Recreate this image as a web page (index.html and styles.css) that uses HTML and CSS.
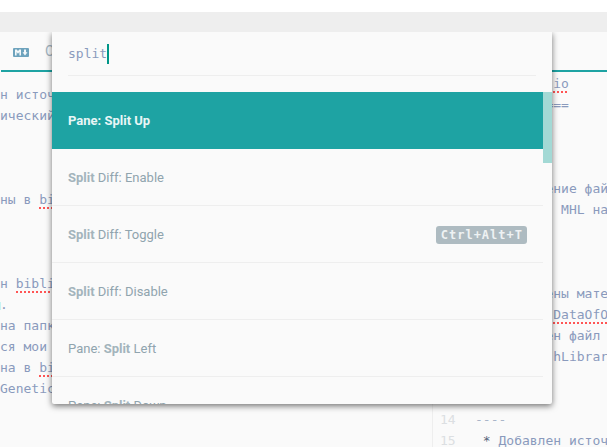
FILE: index.html
```html
<!DOCTYPE html>
<html lang="ru">
<head>
<meta charset="utf-8">
<title>Command Palette</title>
<link rel="stylesheet" href="styles.css">
</head>
<body>
<div class="app">
  <div class="title-gap"></div>
  <div class="toolbar"></div>
  <div class="tabs">
    <div class="tab">
      <svg class="md-icon" width="16" height="9" viewBox="0 0 16 9"><path fill="#6ea3bd" d="M1 0h14a1 1 0 0 1 1 1v7a1 1 0 0 1-1 1H1a1 1 0 0 1-1-1V1a1 1 0 0 1 1-1z"/><path fill="#f4f8fa" d="M2 7.500V1.500h1.800L5 3.200l1.200-1.700H8v6H6.400V4L5 5.800 3.600 4v3.500zM11 1.500h2v2.800h1.500L12 7.500 9.500 4.300H11z"/></svg>
      <span class="tab-name">CHANGELOG.md</span>
    </div>
  </div>
  <div class="panes">
    <div class="pane pane-left">
      <div class="line">н источник данных</div>
      <div class="line">ический справочник</div>
      <div class="line"></div>
      <div class="line"></div>
      <div class="line"></div>
      <div class="line">ны в <span class="typo">bibliography</span></div>
      <div class="line"></div>
      <div class="line"></div>
      <div class="line"></div>
      <div class="line">н <span class="typo">bibliography</span></div>
      <div class="line marked">.</div>
      <div class="line">на папка данных</div>
      <div class="line">ся мои данные</div>
      <div class="line">на в <span class="typo">bibliography</span></div>
      <div class="line">GeneticData</div>
    </div>
    <div class="pane pane-right">
      <div class="gutter">
        <div class="num"></div><div class="num"></div><div class="num"></div><div class="num"></div>
        <div class="num"></div><div class="num"></div><div class="num"></div><div class="num"></div>
        <div class="num"></div><div class="num"></div><div class="num"></div><div class="num"></div>
        <div class="num"></div><div class="num"></div><div class="num"></div><div class="num"></div>
        <div class="num">14</div><div class="num">15</div>
      </div>
      <div class="code">
        <div class="line">  project<span class="typo">.io</span></div>
        <div class="line">============</div>
        <div class="line"></div>
        <div class="line"></div>
        <div class="line"></div>
        <div class="line">  * Изменение файлов</div>
        <div class="line">           MHL на</div>
        <div class="line"></div>
        <div class="line"></div>
        <div class="line"></div>
        <div class="line"> * Добавлены материалы</div>
        <div class="line">          <span class="typo">DataOfOther</span></div>
        <div class="line"> * Добавлен файл</div>
        <div class="line">  в папке hLibrary</div>
        <div class="line"></div>
        <div class="line"></div>
        <div class="line rule">----</div>
        <div class="line"> <span class="star">*</span> Добавлен источник</div>
      </div>
    </div>
  </div>
  <div class="palette">
    <div class="search">
      <div class="query"><span>split</span><i class="caret"></i></div>
    </div>
    <div class="results">
      <ul class="list">
        <li class="item selected"><b>Pane: Split Up</b></li>
        <li class="item"><span><b>Split</b> Diff: Enable</span></li>
        <li class="item"><span><b>Split</b> Diff: Toggle</span><kbd class="key">Ctrl+Alt+T</kbd></li>
        <li class="item"><span><b>Split</b> Diff: Disable</span></li>
        <li class="item"><span>Pane: <b>Split</b> Left</span></li>
        <li class="item"><span>Pane: <b>Split</b> Down</span></li>
      </ul>
      <div class="track"><div class="thumb"></div></div>
    </div>
  </div>
</div>
</body>
</html>
```

FILE: styles.css
```css
* { box-sizing: border-box; }
html, body { margin: 0; height: 100%; }
body { background: #fff; overflow: hidden; }
.app { position: relative; width: 607px; height: 447px; overflow: hidden; background: #fafafa; display: flex; flex-direction: column; }
.title-gap { height: 12px; background: #fff; }
.toolbar { position: relative; z-index: 2; height: 20px; background: #eeeeee; }
.tabs { height: 40px; flex: none; border-bottom: 2px solid #1ea3a3; margin-left: 1px; }
.tab { display: flex; align-items: center; height: 38px; padding-left: 12px; gap: 16px; }
.md-icon { flex: none; margin-top: 2px; }
.tab-name { font: 14px Roboto, sans-serif; color: #a3b3bf; }
.panes { display: flex; flex: 1; min-height: 0; }
.pane { overflow: hidden; font: 13px/21px "DejaVu Sans Mono", monospace; color: #8a9abd; }
.pane-left { width: 432px; padding-top: 12px; }
.pane-right { flex: 1; display: flex; border-left: 1px solid #eeeeee; padding-top: 1px; }
.gutter { width: 42px; flex: none; color: #dcdfe2; padding-left: 7px; }
.num { height: 21px; }
.code { flex: 1; min-width: 0; }
.line { height: 21px; white-space: pre; }
.marked { position: relative; }
.marked::before { content: ""; position: absolute; left: 0; top: 8px; width: 1px; height: 8px; background: #c8f4f4; }
.typo { display: inline-block; height: 21px; background: linear-gradient(90deg, #f55 50%, transparent 50%) 0 18px / 4px 2px repeat-x; }
.rule { color: #a9b5c9; }
.star { color: #56657c; }
.palette { position: absolute; left: 52px; top: 32px; width: 500px; height: 372px; background: #fafafa; box-shadow: 0 2px 6px rgba(0, 0, 0, .55); border-radius: 0 0 2px 2px; overflow: hidden; display: flex; flex-direction: column; }
.search { height: 60px; flex: none; padding: 0 16px; }
.query { height: 44px; border-bottom: 1px solid #eeeeee; display: flex; align-items: center; font: 13px "DejaVu Sans Mono", monospace; color: #8a9abd; }
.caret { width: 2px; height: 20px; background: #009688; }
.results { display: flex; flex: 1; min-height: 0; }
.list { flex: 1; min-width: 0; list-style: none; margin: 0; padding: 0; overflow: hidden; }
.item { height: 57px; padding: 1px 16px 0; display: flex; align-items: center; justify-content: space-between; border-bottom: 1px solid #eeeeee; font: 13px Roboto, sans-serif; color: #90a4ae; }
.item b { font-weight: 700; color: #a3b4bc; }
.item.selected { background: #1ea3a3; border-bottom: 0; padding-top: 0; }
.item.selected b { color: #e8f6f6; }
.key { background: #aebbc1; color: #eef2f3; border-radius: 3px; font: 700 12px/18px "DejaVu Sans Mono", monospace; letter-spacing: 1px; padding: 0 4px 0 5px; height: 18px; }
.track { width: 9px; flex: none; }
.thumb { height: 71px; background: #a3d9d5; }
```
